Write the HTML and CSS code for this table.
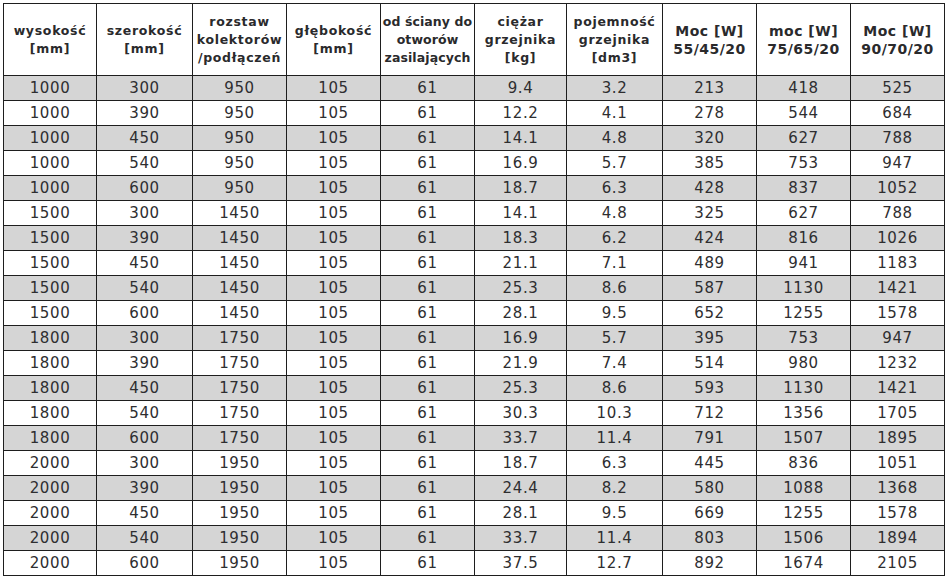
FILE: index.html
```html
<!DOCTYPE html>
<html lang="pl">
<head>
<meta charset="utf-8">
<title>Tabela grzejników</title>
<link rel="stylesheet" href="styles.css">
</head>
<body>
<table class="spec">
<colgroup>
<col class="c1"><col class="c2"><col class="c3"><col class="c4"><col class="c5">
<col class="c6"><col class="c7"><col class="c8"><col class="c9"><col class="c10">
</colgroup>
<thead>
<tr>
<th>wysokość<br>[mm]</th>
<th>szerokość<br>[mm]</th>
<th>rozstaw<br>kolektorów<br>/podłączeń</th>
<th>głębokość<br>[mm]</th>
<th class="tight">od ściany do<br>otworów<br>zasilających</th>
<th>ciężar<br>grzejnika<br>[kg]</th>
<th>pojemność<br>grzejnika<br>[dm3]</th>
<th class="big">Moc [W]<br>55/45/20</th>
<th class="big">moc [W]<br>75/65/20</th>
<th class="big">Moc [W]<br>90/70/20</th>
</tr>
</thead>
<tbody>
<tr class="g"><td>1000</td><td>300</td><td>950</td><td>105</td><td>61</td><td>9.4</td><td>3.2</td><td>213</td><td>418</td><td>525</td></tr>
<tr><td>1000</td><td>390</td><td>950</td><td>105</td><td>61</td><td>12.2</td><td>4.1</td><td>278</td><td>544</td><td>684</td></tr>
<tr class="g"><td>1000</td><td>450</td><td>950</td><td>105</td><td>61</td><td>14.1</td><td>4.8</td><td>320</td><td>627</td><td>788</td></tr>
<tr><td>1000</td><td>540</td><td>950</td><td>105</td><td>61</td><td>16.9</td><td>5.7</td><td>385</td><td>753</td><td>947</td></tr>
<tr class="g"><td>1000</td><td>600</td><td>950</td><td>105</td><td>61</td><td>18.7</td><td>6.3</td><td>428</td><td>837</td><td>1052</td></tr>
<tr><td>1500</td><td>300</td><td>1450</td><td>105</td><td>61</td><td>14.1</td><td>4.8</td><td>325</td><td>627</td><td>788</td></tr>
<tr class="g"><td>1500</td><td>390</td><td>1450</td><td>105</td><td>61</td><td>18.3</td><td>6.2</td><td>424</td><td>816</td><td>1026</td></tr>
<tr><td>1500</td><td>450</td><td>1450</td><td>105</td><td>61</td><td>21.1</td><td>7.1</td><td>489</td><td>941</td><td>1183</td></tr>
<tr class="g"><td>1500</td><td>540</td><td>1450</td><td>105</td><td>61</td><td>25.3</td><td>8.6</td><td>587</td><td>1130</td><td>1421</td></tr>
<tr><td>1500</td><td>600</td><td>1450</td><td>105</td><td>61</td><td>28.1</td><td>9.5</td><td>652</td><td>1255</td><td>1578</td></tr>
<tr class="g"><td>1800</td><td>300</td><td>1750</td><td>105</td><td>61</td><td>16.9</td><td>5.7</td><td>395</td><td>753</td><td>947</td></tr>
<tr><td>1800</td><td>390</td><td>1750</td><td>105</td><td>61</td><td>21.9</td><td>7.4</td><td>514</td><td>980</td><td>1232</td></tr>
<tr class="g"><td>1800</td><td>450</td><td>1750</td><td>105</td><td>61</td><td>25.3</td><td>8.6</td><td>593</td><td>1130</td><td>1421</td></tr>
<tr><td>1800</td><td>540</td><td>1750</td><td>105</td><td>61</td><td>30.3</td><td>10.3</td><td>712</td><td>1356</td><td>1705</td></tr>
<tr class="g"><td>1800</td><td>600</td><td>1750</td><td>105</td><td>61</td><td>33.7</td><td>11.4</td><td>791</td><td>1507</td><td>1895</td></tr>
<tr><td>2000</td><td>300</td><td>1950</td><td>105</td><td>61</td><td>18.7</td><td>6.3</td><td>445</td><td>836</td><td>1051</td></tr>
<tr class="g"><td>2000</td><td>390</td><td>1950</td><td>105</td><td>61</td><td>24.4</td><td>8.2</td><td>580</td><td>1088</td><td>1368</td></tr>
<tr><td>2000</td><td>450</td><td>1950</td><td>105</td><td>61</td><td>28.1</td><td>9.5</td><td>669</td><td>1255</td><td>1578</td></tr>
<tr class="g"><td>2000</td><td>540</td><td>1950</td><td>105</td><td>61</td><td>33.7</td><td>11.4</td><td>803</td><td>1506</td><td>1894</td></tr>
<tr><td>2000</td><td>600</td><td>1950</td><td>105</td><td>61</td><td>37.5</td><td>12.7</td><td>892</td><td>1674</td><td>2105</td></tr>
</tbody>
</table>
</body>
</html>
```
FILE: styles.css
```css
html, body {
  background: #ffffff;
}
body {
  margin: 3px;
  font-family: "DejaVu Sans", "Liberation Sans", sans-serif;
  color: #2e2e30;
}
.spec {
  border-collapse: collapse;
  table-layout: fixed;
  width: 942px;
}
.c1 { width: 93px; }
.c2 { width: 96px; }
.c3 { width: 94px; }
.c4 { width: 94px; }
.c5 { width: 94px; }
.c6 { width: 92px; }
.c7 { width: 96px; }
.c8 { width: 94px; }
.c9 { width: 94px; }
.c10 { width: 94px; }
.spec th, .spec td {
  border: 1px solid #1e1e1e;
  padding: 0;
  text-align: center;
  vertical-align: middle;
  overflow: visible;
  white-space: nowrap;
}
.spec th {
  height: 71px;
  font-size: 12.5px;
  font-weight: bold;
  line-height: 18px;
  letter-spacing: 0.7px;
  color: #2a2a2c;
}
.spec th.tight {
  letter-spacing: 0.1px;
}
.spec th.big {
  font-size: 14px;
  letter-spacing: 0.5px;
}
.spec td {
  height: 24px;
  font-size: 15px;
  line-height: 18px;
  letter-spacing: 0.6px;
}
.spec tr.g td {
  background: #d5d5d5;
}
```
